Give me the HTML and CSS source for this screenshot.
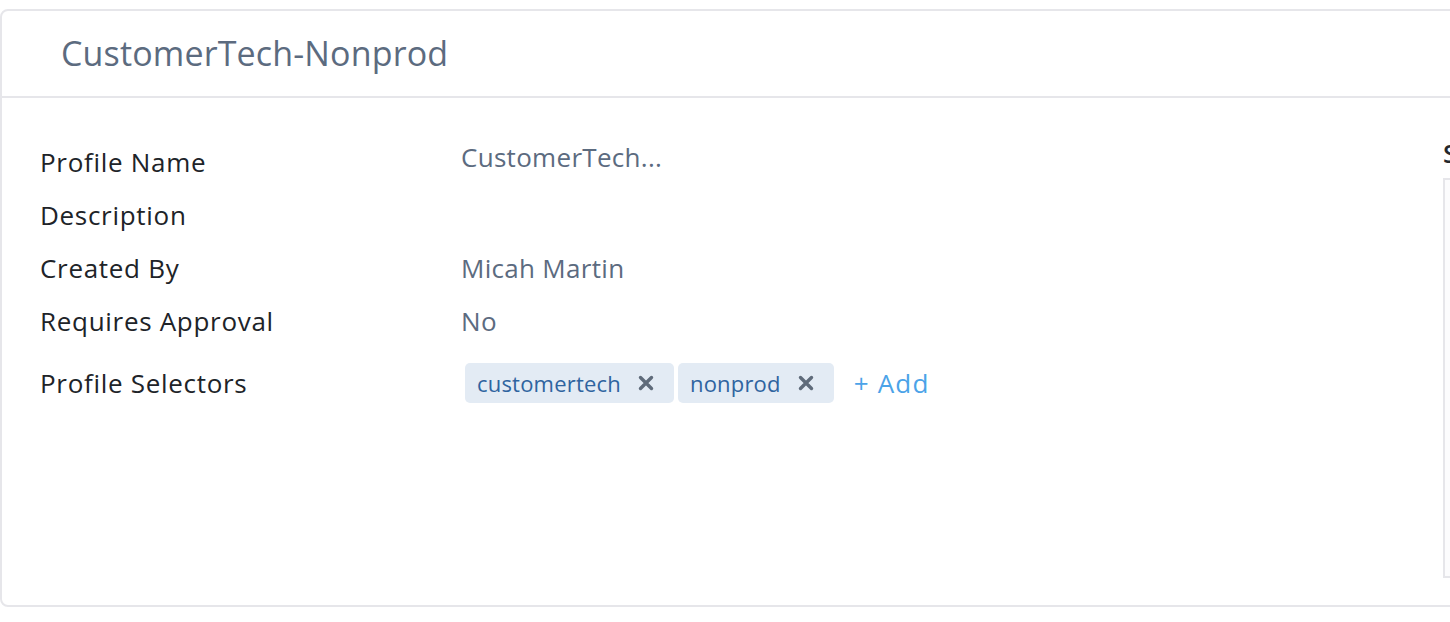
FILE: index.html
```html
<!DOCTYPE html>
<html>
<head>
<meta charset="utf-8">
<link rel="stylesheet" href="styles.css">
</head>
<body>
<div class="card">
  <div class="card-header">
    <h1 class="title">CustomerTech-Nonprod</h1>
  </div>
  <div class="card-body">
    <div class="details">
      <div class="row">
        <div class="label">Profile Name</div>
        <div class="value value-up">CustomerTech...</div>
      </div>
      <div class="row">
        <div class="label">Description</div>
        <div class="value"></div>
      </div>
      <div class="row">
        <div class="label">Created By</div>
        <div class="value">Micah Martin</div>
      </div>
      <div class="row">
        <div class="label">Requires Approval</div>
        <div class="value">No</div>
      </div>
      <div class="row row-tags">
        <div class="label">Profile Selectors</div>
        <div class="tags">
          <span class="tag">customertech<svg class="tag-x" viewBox="0 0 18 18" width="18" height="18"><path d="M3.5 3.5L14.5 14.5M14.5 3.5L3.5 14.5" stroke="currentColor" stroke-width="3.4" stroke-linecap="round"/></svg></span>
          <span class="tag">nonprod<svg class="tag-x" viewBox="0 0 18 18" width="18" height="18"><path d="M3.5 3.5L14.5 14.5M14.5 3.5L3.5 14.5" stroke="currentColor" stroke-width="3.4" stroke-linecap="round"/></svg></span>
          <a class="add">+ Add</a>
        </div>
      </div>
    </div>
    <div class="side">
      <div class="side-title">Settings</div>
      <div class="side-box"></div>
    </div>
  </div>
</div>
</body>
</html>
```

FILE: styles.css
```css
html, body {
  margin: 0;
  padding: 0;
  background: #ffffff;
  overflow: hidden;
  width: 1450px;
  height: 622px;
}
body {
  font-family: "Open Sans", "Noto Sans", sans-serif;
}
.card {
  margin-top: 9px;
  width: 1800px;
  height: 598px;
  box-sizing: border-box;
  border: 2px solid #e6e6ea;
  border-radius: 8px;
  background: #fff;
  display: flex;
  flex-direction: column;
}
.card-header {
  height: 87px;
  box-sizing: border-box;
  border-bottom: 2px solid #e6e6ea;
  display: flex;
  align-items: center;
  padding-left: 59px;
}
.title {
  margin: 0;
  font-weight: 400;
  font-size: 34px;
  color: #5c6b7f;
  letter-spacing: 0.15px;
  padding-bottom: 2px;
}
.card-body {
  display: flex;
  flex: 1;
}
.details {
  width: 1441px;
  flex-shrink: 0;
  padding-top: 37px;
  padding-left: 38px;
  box-sizing: border-box;
}
.row {
  display: flex;
  align-items: center;
  height: 53px;
}
.label {
  width: 421px;
  font-size: 26px;
  letter-spacing: 0.7px;
  color: #202328;
}
.value {
  font-size: 26px;
  letter-spacing: 0.3px;
  color: #5c6b7f;
}
.value-up {
  position: relative;
  top: -5px;
}
.row-tags {
  margin-top: 16px;
  height: 40px;
}
.tags {
  display: flex;
  align-items: center;
  gap: 4px;
  margin-left: 4px;
}
.tag {
  display: inline-flex;
  align-items: center;
  height: 40px;
  box-sizing: border-box;
  padding: 0 19px 0 12px;
  background: #e3ebf4;
  border-radius: 5px;
  color: #2f64a0;
  font-size: 22px;
  letter-spacing: 0.2px;
}
.tag-x {
  margin-left: 16px;
  color: #5f6b7a;
}
.add {
  margin-left: 16px;
  font-size: 26px;
  letter-spacing: 1.2px;
  color: #4ba3e8;
}
.side {
  padding-top: 40px;
  flex-shrink: 0;
}
.side-title {
  font-size: 26px;
  font-weight: 600;
  color: #24272c;
  height: 40px;
  line-height: 30px;
}
.side-box {
  width: 300px;
  height: 400px;
  box-sizing: border-box;
  border: 2px solid #e6e6ea;
  background: #fcfcfd;
}
```
